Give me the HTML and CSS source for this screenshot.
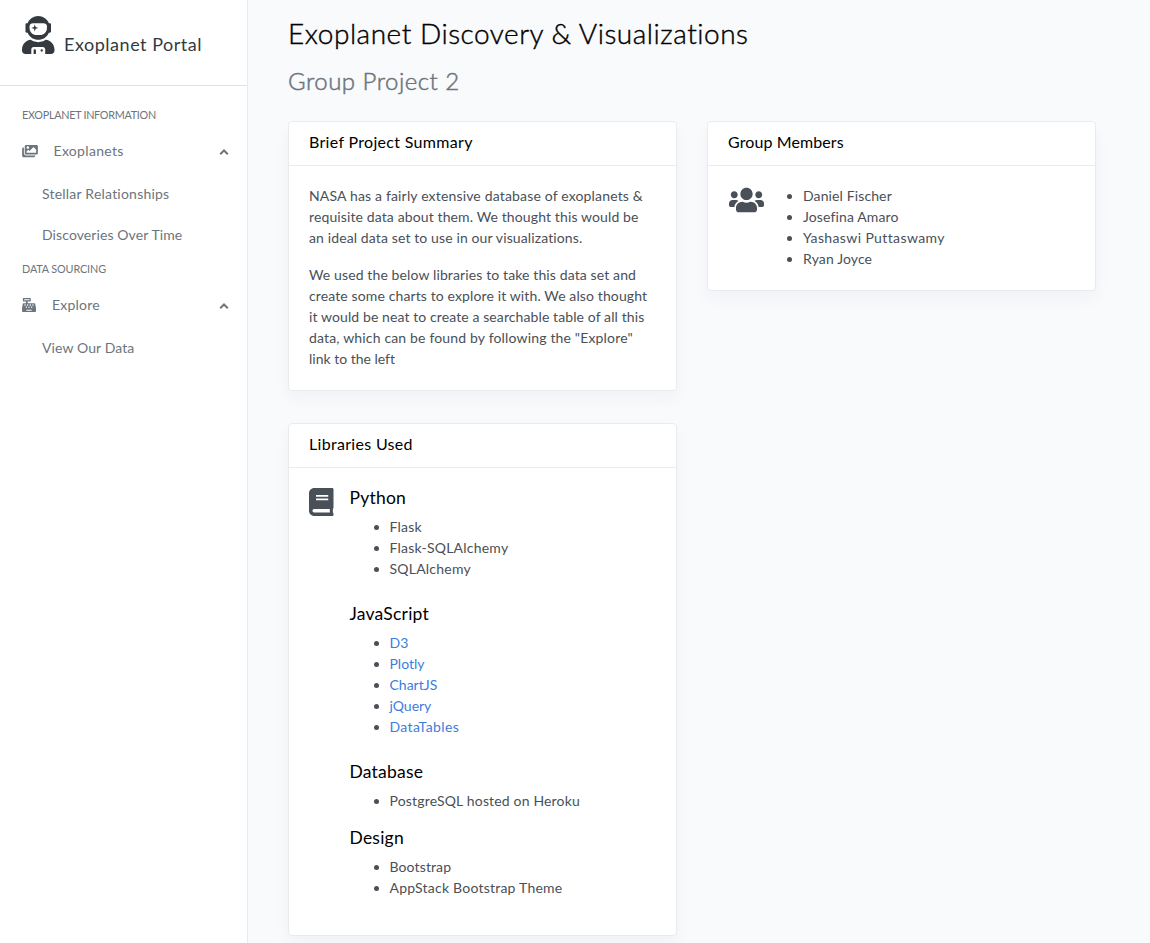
FILE: index.html
```html
<!DOCTYPE html>
<html lang="en">
<head>
<meta charset="utf-8">
<title>Exoplanet Portal</title>
<link rel="stylesheet" href="styles.css">
</head>
<body>
<div class="wrapper">
  <nav class="sidebar">
    <a class="brand">
      <svg class="brand-icon" viewBox="0 0 448 512" preserveAspectRatio="none"><path d="M64 224h13.500c24.700 56.500 80.900 96 146.500 96s121.800-39.500 146.500-96H384c8.800 0 16-7.200 16-16v-96c0-8.800-7.200-16-16-16h-13.500C345.800 39.500 289.600 0 224 0S102.200 39.500 77.500 96H64c-8.800 0-16 7.200-16 16v96c0 8.800 7.200 16 16 16zm40-88c0-22.100 21.500-40 48-40h144c26.500 0 48 17.900 48 40v24c0 53-43 96-96 96h-48c-53 0-96-43-96-96v-24zm72 72l12-36 36-12-36-12-12-36-12 36-36 12 36 12 12 36zm151.600 113.400C297.700 340.700 262.200 352 224 352s-73.700-11.300-103.600-30.600C52.900 328.500 0 385 0 454.400v9.600c0 26.500 21.500 48 48 48h80v-64c0-17.700 14.300-32 32-32h128c17.700 0 32 14.300 32 32v64h80c26.500 0 48-21.500 48-48v-9.600c0-69.400-52.900-125.900-120.400-133zM272 448c-8.800 0-16 7.200-16 16s7.200 16 16 16 16-7.200 16-16-7.200-16-16-16zm-96 0c-8.800 0-16 7.200-16 16v48h32v-48c0-8.800-7.200-16-16-16z"/></svg>
      <span class="brand-name">Exoplanet Portal</span>
    </a>
    <div class="nav-header">EXOPLANET INFORMATION</div>
    <a class="nav-link">
      <svg class="nav-icon nav-icon-wide" viewBox="0 0 576 512"><path d="M480 416v16c0 26.510-21.490 48-48 48H48c-26.510 0-48-21.490-48-48V176c0-26.510 21.490-48 48-48h16v208c0 44.112 35.888 80 80 80h336zm96-80V80c0-26.510-21.490-48-48-48H144c-26.510 0-48 21.490-48 48v256c0 26.510 21.490 48 48 48h384c26.510 0 48-21.490 48-48zM256 128c0 26.510-21.490 48-48 48s-48-21.490-48-48 21.490-48 48-48 48 21.490 48 48zm-96 144l55.515-55.515c4.686-4.686 12.284-4.686 16.971 0L272 256l135.515-135.515c4.686-4.686 12.284-4.686 16.971 0L512 208v112H160v-48z"/></svg>
      <span class="nav-label track-3">Exoplanets</span>
      <svg class="caret" viewBox="0 0 10 6"><path d="M1.200 5.200 5 1.500 8.800 5.200"/></svg>
    </a>
    <a class="nav-sub track-2">Stellar Relationships</a>
    <a class="nav-sub track-1">Discoveries Over Time</a>
    <div class="nav-header nav-header-next">DATA SOURCING</div>
    <a class="nav-link">
      <svg class="nav-icon" viewBox="0 0 512 512"><path d="M511.100 378.800l-26.700-160c-2.600-15.400-15.900-26.700-31.600-26.700H208v-64h96c8.800 0 16-7.200 16-16V16c0-8.800-7.200-16-16-16H48c-8.800 0-16 7.200-16 16v96c0 8.800 7.200 16 16 16h96v64H59.100c-15.600 0-29 11.300-31.600 26.700L.8 378.700c-.6 3.500-.9 7-.9 10.500V480c0 17.700 14.300 32 32 32h448c17.700 0 32-14.300 32-32v-90.700c.1-3.500-.2-7-.8-10.500zM280 248c0-8.800 7.200-16 16-16h16c8.800 0 16 7.200 16 16v16c0 8.800-7.200 16-16 16h-16c-8.800 0-16-7.200-16-16v-16zm-32 64h16c8.800 0 16 7.200 16 16v16c0 8.800-7.200 16-16 16h-16c-8.800 0-16-7.200-16-16v-16c0-8.800 7.200-16 16-16zm-32-80c8.800 0 16 7.200 16 16v16c0 8.800-7.200 16-16 16h-16c-8.800 0-16-7.200-16-16v-16c0-8.800 7.200-16 16-16h16zM80 80V48h192v32H80zm40 200h-16c-8.800 0-16-7.200-16-16v-16c0-8.800 7.200-16 16-16h16c8.800 0 16 7.200 16 16v16c0 8.800-7.200 16-16 16zm16 64v-16c0-8.800 7.200-16 16-16h16c8.800 0 16 7.200 16 16v16c0 8.800-7.200 16-16 16h-16c-8.800 0-16-7.200-16-16zm216 112c0 4.400-3.600 8-8 8H168c-4.400 0-8-3.600-8-8v-16c0-4.400 3.600-8 8-8h176c4.400 0 8 3.600 8 8v16zm24-112c0 8.800-7.200 16-16 16h-16c-8.800 0-16-7.200-16-16v-16c0-8.800 7.200-16 16-16h16c8.800 0 16 7.200 16 16v16zm48-80c0 8.800-7.200 16-16 16h-16c-8.800 0-16-7.200-16-16v-16c0-8.800 7.200-16 16-16h16c8.800 0 16 7.200 16 16v16z"/></svg>
      <span class="nav-label track-2">Explore</span>
      <svg class="caret" viewBox="0 0 10 6"><path d="M1.200 5.200 5 1.500 8.800 5.200"/></svg>
    </a>
    <a class="nav-sub track-1">View Our Data</a>
  </nav>
  <main class="content">
    <h1 class="title">Exoplanet Discovery &amp; Visualizations</h1>
    <h2 class="subtitle">Group Project 2</h2>
    <div class="grid">
      <div class="column">
        <section class="card">
          <h5 class="card-title track-3">Brief Project Summary</h5>
          <div class="card-body">
            <p class="text"><span class="track-wide">NASA has a fairly extensive database of exoplanets &amp;</span><br>requisite data about them. We thought this would be<br>an ideal data set to use in our visualizations.</p>
            <p class="text">We used the below libraries to take this data set and<br>create some charts to explore it with. We also thought<br><span class="track-1">it would be neat to create a searchable table of all this</span><br><span class="track-wide">data, which can be found by following the "Explore"</span><br><span class="track-0">link to the left</span></p>
          </div>
        </section>
        <section class="card">
          <h5 class="card-title track-3">Libraries Used</h5>
          <div class="card-body media">
            <svg class="book-icon" viewBox="0 0 448 512"><path d="M448 360V24c0-13.300-10.700-24-24-24H96C43 0 0 43 0 96v320c0 53 43 96 96 96h328c13.300 0 24-10.700 24-24v-16c0-7.500-3.500-14.300-8.900-18.700-4.200-15.400-4.200-59.300 0-74.700 5.400-4.300 8.900-11.100 8.900-18.600zM128 134c0-3.300 2.700-6 6-6h212c3.300 0 6 2.700 6 6v20c0 3.300-2.700 6-6 6H134c-3.300 0-6-2.700-6-6v-20zm0 64c0-3.300 2.700-6 6-6h212c3.300 0 6 2.700 6 6v20c0 3.300-2.700 6-6 6H134c-3.300 0-6-2.700-6-6v-20zm253.400 250H96c-17.700 0-32-14.300-32-32 0-17.600 14.400-32 32-32h285.400c-1.900 17.100-1.900 46.900 0 64z"/></svg>
            <div class="media-body">
              <h4 class="group-title">Python</h4>
              <ul class="list list-spaced track-2"><li>Flask</li><li>Flask-SQLAlchemy</li><li>SQLAlchemy</li></ul>
              <h4 class="group-title">JavaScript</h4>
              <ul class="list list-spaced track-0"><li><a class="link">D3</a></li><li><a class="link">Plotly</a></li><li><a class="link">ChartJS</a></li><li><a class="link">jQuery</a></li><li><a class="link track-4">DataTables</a></li></ul>
              <h4 class="group-title">Database</h4>
              <ul class="list track-wide"><li>PostgreSQL hosted on Heroku</li></ul>
              <h4 class="group-title">Design</h4>
              <ul class="list"><li>Bootstrap</li><li class="track-2">AppStack Bootstrap Theme</li></ul>
            </div>
          </div>
        </section>
      </div>
      <div class="column">
        <section class="card">
          <h5 class="card-title track-1">Group Members</h5>
          <div class="card-body media">
            <svg class="users-icon" viewBox="0 0 640 512"><path d="M96 224c35.300 0 64-28.700 64-64s-28.700-64-64-64-64 28.700-64 64 28.700 64 64 64zm448 0c35.300 0 64-28.700 64-64s-28.700-64-64-64-64 28.700-64 64 28.700 64 64 64zm32 32h-64c-17.600 0-33.500 7.100-45.100 18.600 40.300 22.100 68.900 62 75.100 109.400h66c17.700 0 32-14.300 32-32v-32c0-35.300-28.700-64-64-64zm-256 0c61.900 0 112-50.100 112-112S381.900 32 320 32 208 82.100 208 144s50.100 112 112 112zm76.800 32h-8.300c-20.800 10-43.900 16-68.500 16s-47.600-6-68.500-16h-8.300C179.600 288 128 339.600 128 403.200V432c0 26.500 21.500 48 48 48h288c26.500 0 48-21.500 48-48v-28.800c0-63.600-51.600-115.200-115.200-115.200zm-223.700-13.400C161.500 263.100 145.600 256 128 256H64c-35.300 0-64 28.700-64 64v32c0 17.700 14.300 32 32 32h65.900c6.300-47.400 34.900-87.300 75.200-109.400z"/></svg>
            <ul class="list list-flush"><li>Daniel Fischer</li><li>Josefina Amaro</li><li class="track-4">Yashaswi Puttaswamy</li><li>Ryan Joyce</li></ul>
          </div>
        </section>
      </div>
    </div>
  </main>
</div>
</body>
</html>
```
FILE: styles.css
```css
* { box-sizing: border-box; }
body {
  margin: 0;
  background: #f9fafc;
  color: #495057;
  font: 400 14px/21px Lato, "Open Sans", sans-serif;
  letter-spacing: .12px;
  font-variant-ligatures: none;
}
h1, h2, h4, h5, p, ul { margin: 0; padding: 0; }
svg { display: block; fill: currentColor; flex: none; }
.wrapper { display: flex; height: 943px; overflow: hidden; }
.sidebar {
  flex: none;
  width: 248px;
  background: #fff;
  border-right: 1px solid #e9ecef;
  color: #6c757d;
}
.brand {
  display: flex;
  height: 86px;
  padding: 16px 22px 0;
  gap: 9.500px;
  border-bottom: 1px solid #dee2e6;
  color: #343a40;
}
.brand-icon { width: 32.500px; height: 38px; }
.brand-name { padding-top: 15px; font-size: 18px; line-height: 27px; letter-spacing: .52px; white-space: nowrap; }
.nav-header { height: 43px; padding: 20px 22px 0; font-size: 10.800px; line-height: 18px; letter-spacing: -.28px; }
.nav-header-next { height: 28px; padding-top: 5px; letter-spacing: -.11px; }
.nav-link { display: flex; align-items: center; height: 44px; padding: 0 18px 2px 22px; }
.nav-icon { width: 14px; height: 14px; margin: 1px 16px 0 0; }
.nav-icon-wide { width: 16px; margin-right: 15.500px; }
.nav-label { flex: 1; }
.caret { width: 10px; height: 6px; margin: 3px 0 0; fill: none; stroke: currentColor; stroke-width: 2; }
.nav-sub { display: flex; align-items: center; height: 41px; padding-left: 42px; }
.content { flex: 1; padding: 16px 54px 0 40px; }
.title { color: #000; font-size: 28px; font-weight: 300; line-height: 34px; letter-spacing: .52px; -webkit-text-stroke: .4px; }
.subtitle { margin-top: 16px; color: #6c757d; font-size: 24px; font-weight: 300; line-height: 29px; letter-spacing: .5px; -webkit-text-stroke: .5px; }
.grid { display: grid; grid-template-columns: 389px 389px; gap: 30px; margin-top: 26px; }
.card {
  margin-bottom: 32px;
  background: #fff;
  border: 1px solid #e9ecef;
  border-radius: 4px;
  box-shadow: 0 8px 16px rgba(31, 45, 65, .04);
}
.card-title {
  height: 44px;
  padding: 10px 20px 0;
  border-bottom: 1px solid #e9ecef;
  color: #000;
  font-size: 16px;
  font-weight: 400;
  line-height: 20px;
}
.card-body { padding: 19px 20px 21px; }
.text + .text { margin-top: 16px; }
.media { display: flex; }
.book-icon { width: 24.500px; height: 28px; margin: .5px 16px 0 0; }
.users-icon { width: 35px; height: 28px; margin: .5px -.5px 0 .5px; }
.group-title { margin-bottom: 8px; color: #000; font-size: 17.500px; font-weight: 400; line-height: 21px; letter-spacing: .22px; }
.list { padding-left: 40px; margin-bottom: 16px; }
.list-spaced { margin-bottom: 24px; }
.list-flush { margin-bottom: 0; }
.link { color: #3b7ddd; }
.track-0 { letter-spacing: 0; }
.track-1 { letter-spacing: .1px; }
.track-wide { letter-spacing: .165px; }
.track-2 { letter-spacing: .22px; }
.track-3 { letter-spacing: .31px; }
.track-4 { letter-spacing: .38px; }
```
